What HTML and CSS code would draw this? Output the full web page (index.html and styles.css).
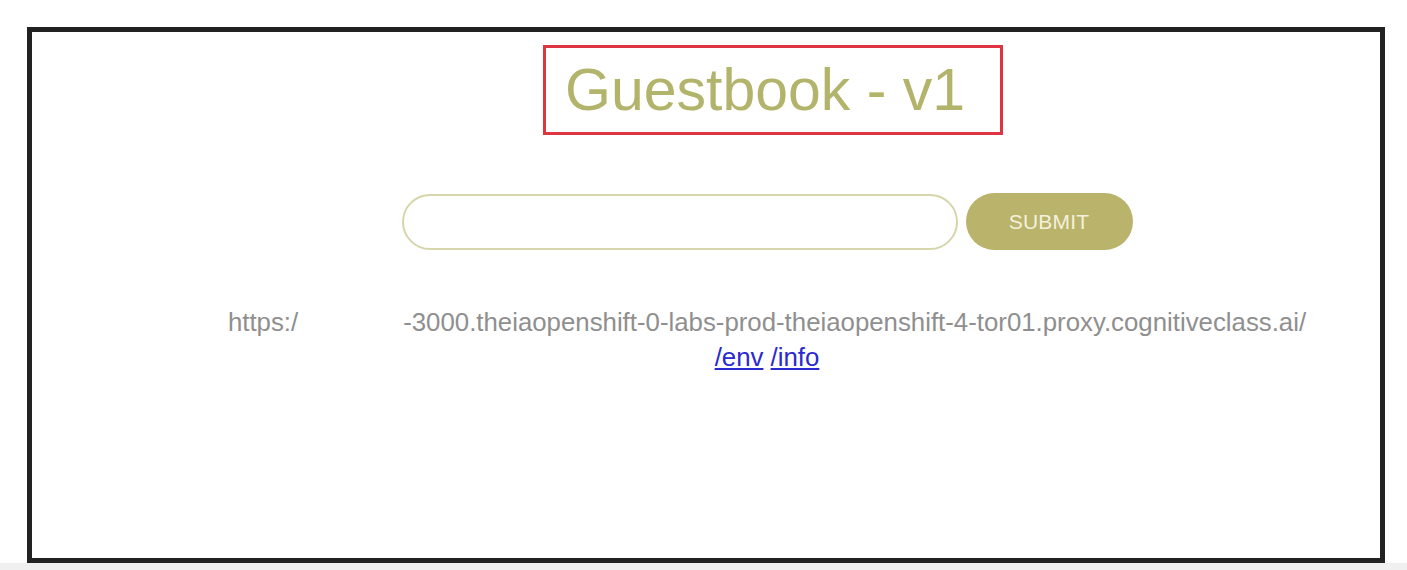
FILE: index.html
```html
<!DOCTYPE html>
<html>
<head>
<meta charset="utf-8">
<link rel="stylesheet" href="styles.css">
</head>
<body>
<div class="page">
  <div class="frame">
    <div class="content">
      <h1 class="title">Guestbook - v1</h1>
      <form class="entry">
        <input class="field" type="text">
        <button class="submit" type="button">SUBMIT</button>
      </form>
      <div class="url"><span>https:/</span><span class="redact"></span><span>-3000.theiaopenshift-0-labs-prod-theiaopenshift-4-tor01.proxy.cognitiveclass.ai/</span></div>
      <div class="links"><a href="#">/env</a> <a href="#">/info</a></div>
    </div>
  </div>
</div>
<div class="strip"></div>
</body>
</html>
```

FILE: styles.css
```css
html, body {
  margin: 0;
  padding: 0;
  background: #ffffff;
  font-family: "Liberation Sans", Arial, sans-serif;
}
.page {
  padding: 27px 20px 0 27px;
}
.frame {
  border: 5px solid #222222;
  height: 526px;
  box-sizing: content-box;
  width: 1348px;
}
.content {
  display: flex;
  flex-direction: column;
  align-items: center;
  padding-left: 122px;
}
.title {
  margin: 13px 0 0 12px;
  width: 460px;
  height: 90px;
  box-sizing: border-box;
  border: 3px solid #df3542;
  padding-left: 19px;
  font-weight: normal;
  font-size: 59px;
  color: #b3b46c;
  text-align: left;
  line-height: 85px;
}
.entry {
  margin-top: 58px;
  display: flex;
  gap: 8px;
  align-items: center;
}
.field {
  width: 556px;
  height: 56px;
  box-sizing: border-box;
  border: 2px solid #d6d6ac;
  border-radius: 28px;
  outline: none;
  background: #fff;
}
.submit {
  width: 167px;
  height: 57px;
  border: none;
  border-radius: 29px;
  background: #b9b36b;
  color: #f4f1da;
  font-family: "Liberation Sans", Arial, sans-serif;
  font-size: 21px;
  letter-spacing: 0.2px;
}
.url {
  margin-top: 57px;
  font-size: 25.8px;
  color: #8f8f8f;
  white-space: nowrap;
  line-height: 30px;
}
.redact {
  display: inline-block;
  width: 105px;
}
.links {
  font-size: 25.8px;
  line-height: 30px;
  margin-top: 5px;
}
.links a {
  color: #2a2ad0;
}
.strip {
  height: 10px;
  background: #f0f0f0;
}
```
